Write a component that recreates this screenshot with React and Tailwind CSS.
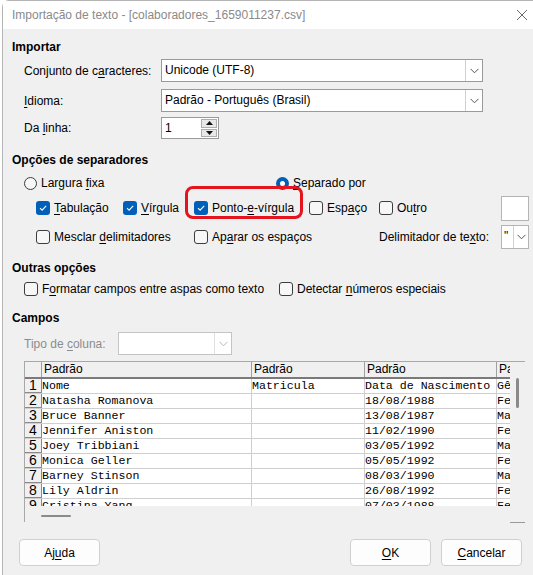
import React from 'react';

const rows = [
  ['Nome', 'Matricula', 'Data de Nascimento', 'Gênero'],
  ['Natasha Romanova', '', '18/08/1988', 'Feminino'],
  ['Bruce Banner', '', '13/08/1987', 'Masculino'],
  ['Jennifer Aniston', '', '11/02/1990', 'Feminino'],
  ['Joey Tribbiani', '', '03/05/1992', 'Masculino'],
  ['Monica Geller', '', '05/05/1992', 'Feminino'],
  ['Barney Stinson', '', '08/03/1990', 'Masculino'],
  ['Lily Aldrin', '', '26/08/1992', 'Feminino'],
  ['Cristina Yang', '', '07/03/1988', 'Feminino'],
];

const cols = ['w-[210px]', 'w-[113px]', 'w-[132px]', 'w-[15px]'];

function U({ children }) {
  return <span className="underline underline-offset-[2px] decoration-1">{children}</span>;
}

function Check({ checked }) {
  if (checked) {
    return (
      <span className="flex h-[14px] w-[14px] shrink-0 items-center justify-center rounded-[3px] bg-[#005fb8]">
        <svg width="10" height="10" viewBox="0 0 10 10">
          <path d="M2 5.2 L4.1 7.2 L8.2 2.8" fill="none" stroke="white" strokeWidth="1.1" />
        </svg>
      </span>
    );
  }
  return <span className="h-[14px] w-[14px] shrink-0 rounded-[3px] border border-[#3d3d3d] bg-[#f7f7f7]" />;
}

function Radio({ checked }) {
  if (checked) {
    return (
      <span className="flex h-[13px] w-[13px] shrink-0 items-center justify-center rounded-full bg-[#005fb8]">
        <span className="h-[5px] w-[5px] rounded-full bg-white" />
      </span>
    );
  }
  return <span className="h-[13px] w-[13px] shrink-0 rounded-full border border-[#3d3d3d] bg-[#f7f7f7]" />;
}

function Chevron({ color = '#555' }) {
  return (
    <svg width="9" height="6" viewBox="0 0 9 6">
      <path d="M0.5 0.8 L4.5 4.8 L8.5 0.8" fill="none" stroke={color} strokeWidth="1" />
    </svg>
  );
}

function Combo({ value, className }) {
  return (
    <div className={`flex h-[23px] items-stretch border border-[#9a9a9a] bg-white ${className}`}>
      <span className="flex-1 truncate pl-[3px] leading-[21px]">{value}</span>
      <span className="flex w-[17px] items-center justify-center border-l border-[#d0d0d0]">
        <Chevron />
      </span>
    </div>
  );
}

function Opt({ children, checked, radio, className = '' }) {
  return (
    <div className={`flex items-center gap-[4px] ${className}`}>
      {radio ? <Radio checked={checked} /> : <Check checked={checked} />}
      <span className="whitespace-nowrap">{children}</span>
    </div>
  );
}

function Button({ children, className = '' }) {
  return (
    <div className={`flex h-[27px] w-[81px] items-center justify-center rounded-[4px] border border-[#d0d0d0] bg-[#fdfdfd] ${className}`}>
      {children}
    </div>
  );
}

export default function App() {
  return (
    <div className="relative h-[575px] w-[533px] overflow-hidden bg-white font-['Liberation_Sans',sans-serif] text-[12px] text-black">
      <div className="ml-[2px] flex h-full flex-col rounded-tl-[7px] border-l border-t border-[#b4b4b4]">
        <div className="flex h-[28px] shrink-0 items-center justify-between bg-white pl-[9px] pr-[5px]">
          <span className="text-[#8a8a8a]">Importação de texto - [colaboradores_1659011237.csv]</span>
          <svg width="12" height="12" viewBox="0 0 12 12">
            <path d="M1 1 L11 11 M11 1 L1 11" stroke="#6a6a6a" strokeWidth="1" />
          </svg>
        </div>

        <div className="flex flex-1 flex-col bg-[#f0f0f0] pl-[9px]">
          <div className="mt-[10px] h-[16px] font-bold leading-[16px]">Importar</div>

          <div className="mt-[4px] flex items-center pl-[12px]">
            <span className="w-[137px]">Conjunto de c<U>a</U>racteres:</span>
            <Combo value="Unicode (UTF-8)" className="w-[322px]" />
          </div>
          <div className="mt-[7px] flex items-center pl-[12px]">
            <span className="w-[137px]"><U>I</U>dioma:</span>
            <Combo value="Padrão - Português (Brasil)" className="w-[322px]" />
          </div>
          <div className="mt-[5px] flex items-center pl-[12px]">
            <span className="w-[137px]">Da <U>l</U>inha:</span>
            <div className="flex h-[22px] w-[58px] items-stretch border border-[#9a9a9a] bg-white">
              <span className="flex-1 pl-[3px] leading-[20px]">1</span>
              <div className="m-[1px] flex w-[16px] flex-col gap-[1px]">
                <span className="flex flex-1 items-center justify-center border border-[#adadad] bg-[#e8e8e8]">
                  <svg width="7" height="4" viewBox="0 0 7 4"><path d="M0 4 L3.5 0 L7 4 Z" fill="#111" /></svg>
                </span>
                <span className="flex flex-1 items-center justify-center border border-[#adadad] bg-[#e8e8e8]">
                  <svg width="7" height="4" viewBox="0 0 7 4"><path d="M0 0 L3.5 4 L7 0 Z" fill="#111" /></svg>
                </span>
              </div>
            </div>
          </div>

          <div className="mt-[13px] h-[16px] font-bold leading-[16px]">Opções de separadores</div>
          <div className="mt-[7px] flex h-[16px] items-center pl-[12px]">
            <Opt radio className="w-[252px]">Largura <U>f</U>ixa</Opt>
            <Opt radio checked><U>S</U>eparado por</Opt>
          </div>
          <div className="mt-[4px] flex h-[26px] items-center pl-[24px]">
            <Opt checked className="w-[87px]"><U>T</U>abulação</Opt>
            <Opt checked className="w-[71px]"><U>V</U>írgula</Opt>
            <div className="relative w-[115px]">
              <Opt checked>Ponto-<U>e</U>-vírgula</Opt>
              <span className="absolute left-[-9px] top-[-13px] h-[33px] w-[118px] rounded-[8px] border-[3px] border-[#e5131d]" />
            </div>
            <Opt className="w-[70px]">Esp<U>a</U>ço</Opt>
            <Opt className="w-[122px]">Ou<U>t</U>ro</Opt>
            <span className="h-[25px] w-[28px] border border-[#b4b4b4] bg-white" />
          </div>
          <div className="mt-[4px] flex h-[24px] items-center pl-[24px]">
            <Opt className="w-[158px]">Mesclar <U>d</U>elimitadores</Opt>
            <Opt className="w-[185px]">Ap<U>a</U>rar os espaços</Opt>
            <span className="w-[122px]">Delimitador de te<U>x</U>to:</span>
            <div className="flex h-[24px] w-[28px] items-stretch border border-[#b4b4b4] bg-white">
              <span className="w-[11px] pl-[2px] leading-[20px]">"</span>
              <span className="flex flex-1 items-center justify-center border-l border-[#d0d0d0]"><Chevron /></span>
            </div>
          </div>

          <div className="mt-[11px] h-[16px] font-bold leading-[16px]">Outras opções</div>
          <div className="mt-[5px] flex h-[16px] items-center pl-[12px]">
            <Opt className="w-[255px]">F<U>o</U>rmatar campos entre aspas como texto</Opt>
            <Opt>Detectar <U>n</U>úmeros especiais</Opt>
          </div>

          <div className="mt-[13px] h-[16px] font-bold leading-[16px]">Campos</div>
          <div className="mt-[6px] flex items-center pl-[12px]">
            <span className="w-[94px] text-[#8c8c8c]">Tipo de <U>c</U>oluna:</span>
            <div className="flex h-[23px] w-[114px] items-stretch border border-[#c4c4c4] bg-white">
              <span className="flex-1" />
              <span className="flex w-[17px] items-center justify-center border-l border-[#e0e0e0]"><Chevron color="#b8b8b8" /></span>
            </div>
          </div>

          <div className="ml-[12px] mt-[6px] flex h-[161px] w-[501px] flex-col border-l border-t border-[#a8a8a8]">
            <div className="flex h-[144px]">
              <div className="flex w-[486px] flex-col overflow-hidden bg-white">
                <div className="flex h-[17px] shrink-0 border-b-2 border-[#7a7a7a] bg-[#f0f0f0]">
                  <span className="w-[17px] shrink-0 border-r border-[#a0a0a0]" />
                  {cols.map((c, i) => (
                    <span key={i} className={`${c} shrink-0 overflow-hidden whitespace-nowrap border-r border-[#a0a0a0] pl-[2px] leading-[15px]`}>
                      Padrão
                    </span>
                  ))}
                </div>
                {rows.map((r, i) => (
                  <div key={i} className="flex h-[15px] shrink-0 border-b border-[#cfcfcf]">
                    <span className="flex w-[17px] shrink-0 items-end justify-center border-r border-b border-[#8a8a8a] bg-[#f0f0f0] text-[14px] leading-[14px]">
                      {i + 1}
                    </span>
                    {r.map((v, j) => (
                      <span
                        key={j}
                        className={`${cols[j]} shrink-0 overflow-hidden whitespace-nowrap border-r border-[#cfcfcf] font-['Liberation_Mono',monospace] text-[11.6px] leading-[14px]`}
                      >
                        {v}
                      </span>
                    ))}
                  </div>
                ))}
              </div>
              <div className="flex w-[15px] justify-center bg-[#f0f0f0] pt-[16px]">
                <span className="h-[30px] w-[3px] rounded-full bg-[#8a8a8a]" />
              </div>
            </div>
            <div className="flex h-[17px] items-end">
              <div className="flex h-[17px] w-[486px] flex-col justify-end pb-[6px] pl-[16px]">
                <span className="h-[2px] w-[30px] rounded-full bg-[#8a8a8a]" />
              </div>
              <span className="h-[1px] w-[15px] bg-[#9a9a9a]" />
            </div>
          </div>

          <div className="mt-[17px] flex items-center pl-[7px]">
            <Button>Aj<U>u</U>da</Button>
            <Button className="ml-[250px]"><U>O</U>K</Button>
            <Button className="ml-[10px]"><U>C</U>ancelar</Button>
          </div>
        </div>
      </div>
    </div>
  );
}
